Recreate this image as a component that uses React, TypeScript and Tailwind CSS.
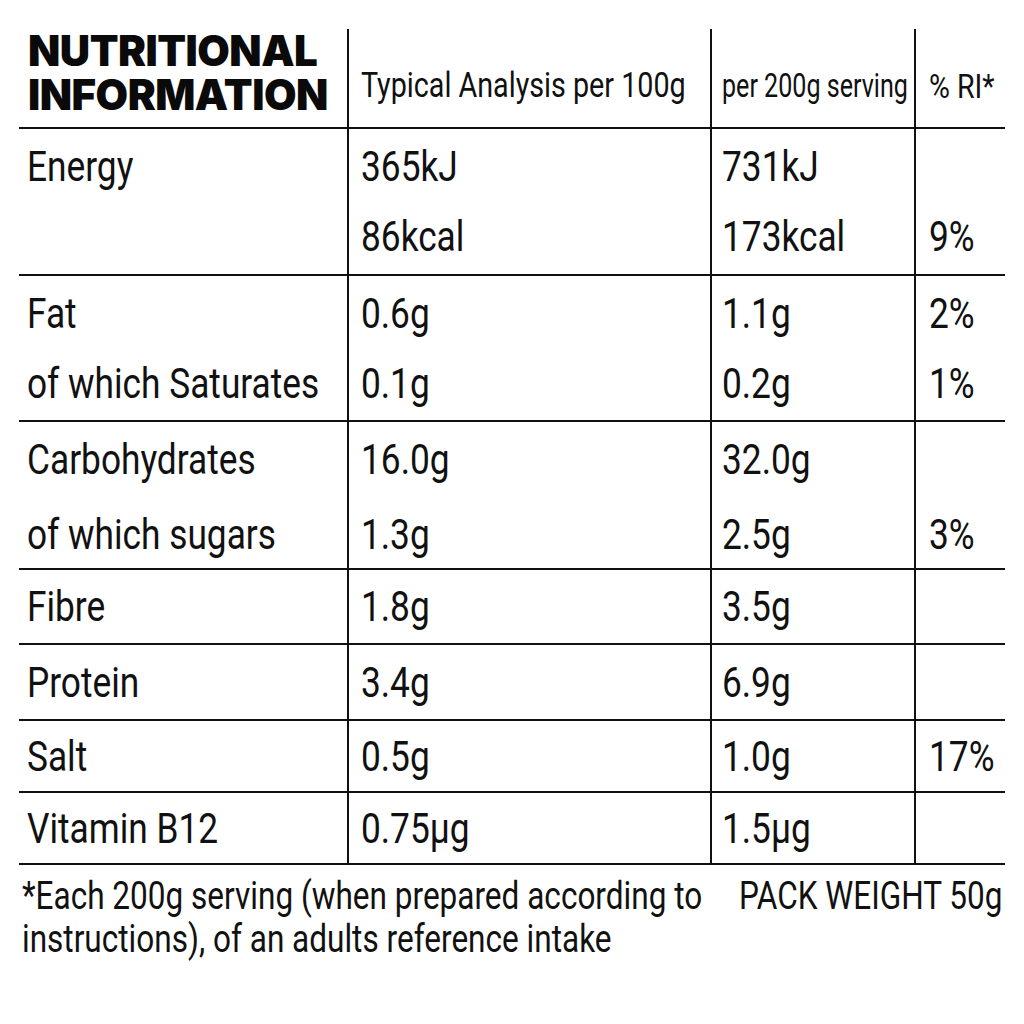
import React from 'react';

const COLS = 'grid grid-cols-[328px_363px_204px_91px] border-b-2 border-[#111]';
const BODY = "font-['Roboto',sans-serif] text-[43px] text-[#111]";
const SQ = 'inline-block whitespace-nowrap origin-left scale-x-[0.82]';

type Row = { h: string; lh: string; cells: string[][] };

const rows: Row[] = [
  { h: 'h-[147px]', lh: 'h-[70px]', cells: [['Energy', ''], ['365kJ', '86kcal'], ['731kJ', '173kcal'], ['', '9%']] },
  { h: 'h-[146px]', lh: 'h-[70px]', cells: [['Fat', 'of which Saturates'], ['0.6g', '0.1g'], ['1.1g', '0.2g'], ['2%', '1%']] },
  { h: 'h-[148px]', lh: 'h-[75px]', cells: [['Carbohydrates', 'of which sugars'], ['16.0g', '1.3g'], ['32.0g', '2.5g'], ['', '3%']] },
  { h: 'h-[75px]', lh: 'h-[70px]', cells: [['Fibre'], ['1.8g'], ['3.5g'], ['']] },
  { h: 'h-[76px]', lh: 'h-[70px]', cells: [['Protein'], ['3.4g'], ['6.9g'], ['']] },
  { h: 'h-[72px]', lh: 'h-[70px]', cells: [['Salt'], ['0.5g'], ['1.0g'], ['17%']] },
  { h: 'h-[72px]', lh: 'h-[70px]', cells: [['Vitamin B12'], ['0.75µg'], ['1.5µg'], ['']] },
];

const pads = ['pl-[8px]', 'pl-[12px] border-l-2 border-[#111]', 'pl-[10px] border-l-2 border-[#111]', 'pl-[13px] border-l-2 border-[#111]'];

const App: React.FC = () => {
  return (
    <div className="min-h-screen w-[1024px] bg-white pt-[29px] pl-[19px]">
      <div className="w-[986px]">
        {/* header */}
        <div className={`${COLS} h-[100px]`}>
          <div className="pl-[9px] font-['Inter',sans-serif] font-black text-[42px] text-[#0a0a0a] tracking-[-0.5px]">
            <div className="h-[44px] leading-[44px]">NUTRITIONAL</div>
            <div className="h-[44px] leading-[44px]">INFORMATION</div>
          </div>
          <div className="flex items-center pt-[16px] pl-[12px] border-l-2 border-[#111] font-['Roboto',sans-serif] text-[35px] leading-[36px] text-[#111]">
            <span className={SQ}>Typical Analysis per 100g</span>
          </div>
          <div className="flex items-center pt-[16px] pl-[10px] border-l-2 border-[#111] font-['Roboto',sans-serif] text-[33px] leading-[36px] text-[#111]">
            <span className="inline-block whitespace-nowrap origin-left scale-x-[0.76]">per 200g serving</span>
          </div>
          <div className="flex items-center pt-[16px] pl-[13px] border-l-2 border-[#111] font-['Roboto',sans-serif] text-[34px] leading-[36px] text-[#111]">
            <span className="inline-block whitespace-nowrap origin-left scale-x-[0.84]">% RI*</span>
          </div>
        </div>

        {rows.map((row, i) => (
          <div key={i} className={`${COLS} ${row.h}`}>
            {row.cells.map((lines, j) => (
              <div key={j} className={`flex flex-col justify-center ${pads[j]} ${BODY}`}>
                {lines.map((t, k) => (
                  <div key={k} className={`${row.lh} flex items-center leading-none`}>
                    <span className={SQ}>{t}</span>
                  </div>
                ))}
              </div>
            ))}
          </div>
        ))}

        {/* footer */}
        <div className="flex pt-[10px] font-['Roboto',sans-serif] text-[38px] leading-[43px] text-[#111]">
          <div className="w-[720px] shrink-0 pl-[3px]">
            <div className="h-[43px]">
              <span className="inline-block whitespace-nowrap origin-left scale-x-[0.83]">*Each 200g serving (when prepared according to</span>
            </div>
            <div className="h-[43px]">
              <span className="inline-block whitespace-nowrap origin-left scale-x-[0.83]">instructions), of an adults reference intake</span>
            </div>
          </div>
          <div className="w-[266px] shrink-0">
            <span className="inline-block whitespace-nowrap origin-left scale-x-[0.83]">PACK WEIGHT 50g</span>
          </div>
        </div>
      </div>
    </div>
  );
};

export default App;
